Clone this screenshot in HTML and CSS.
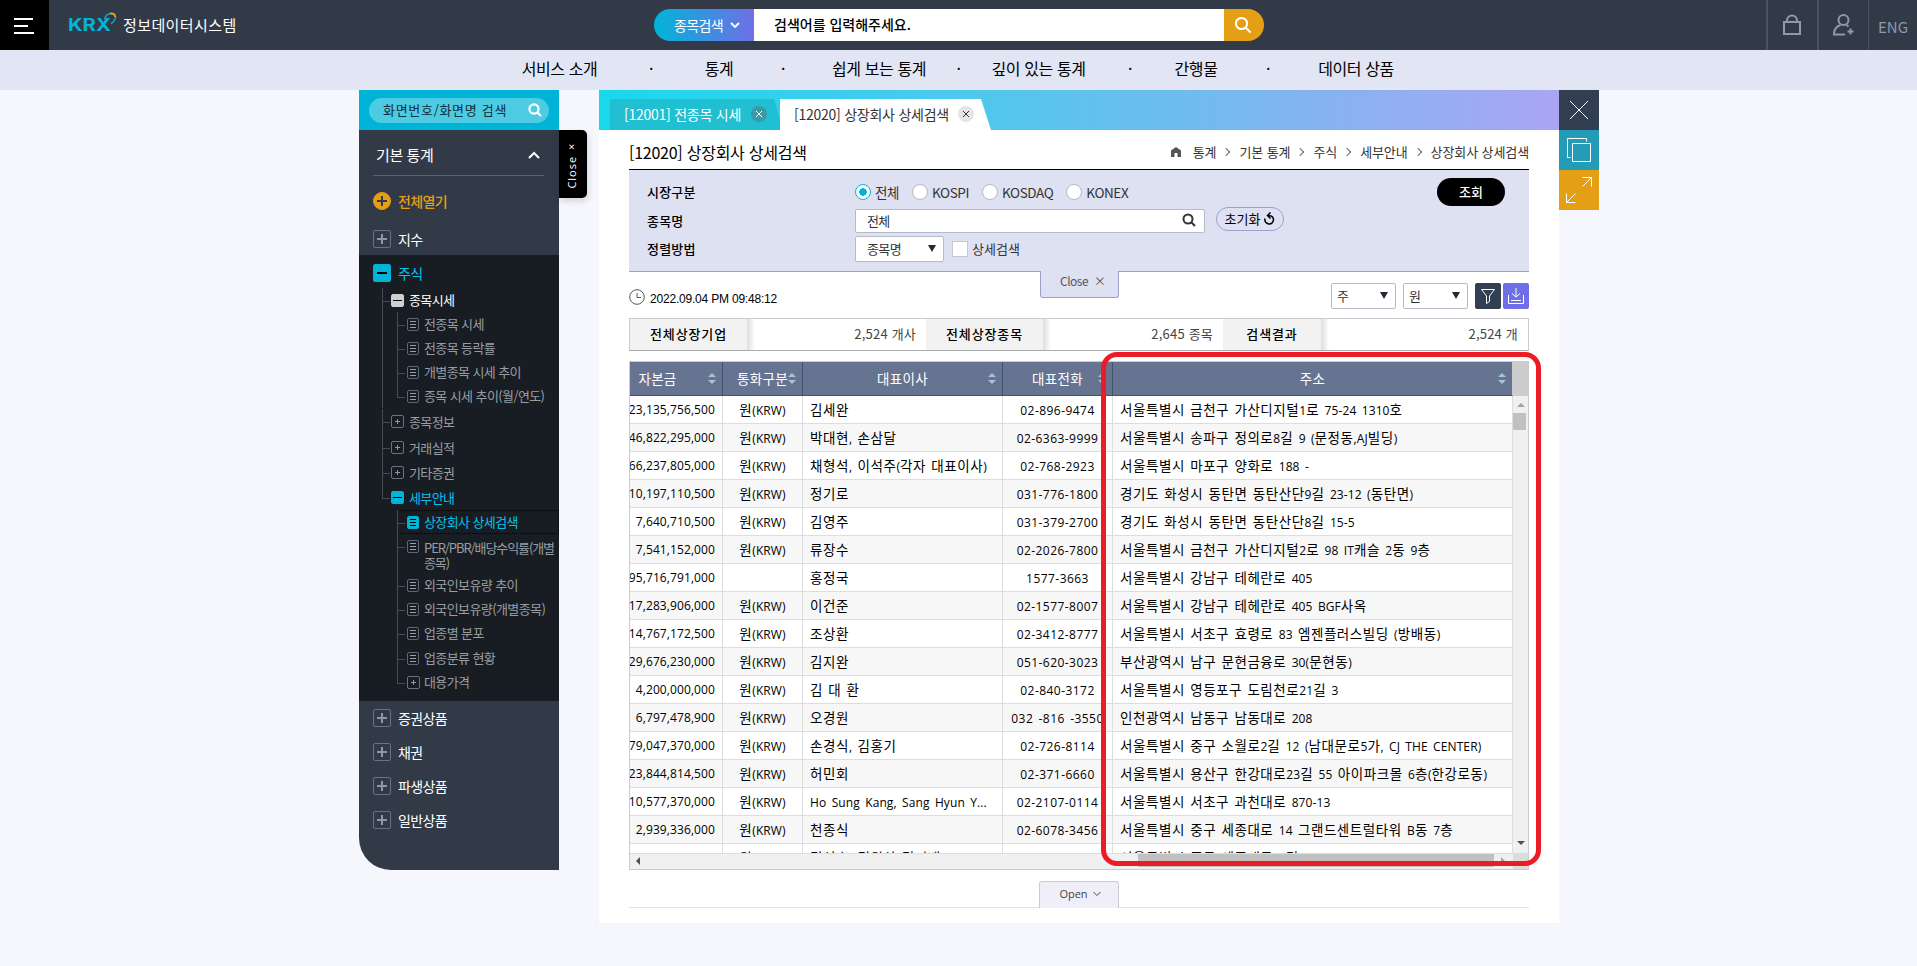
FILE: index.html
```html
<!DOCTYPE html>
<html lang="ko">
    <head>
        <meta charset="utf-8">
        <title>KRX 정보데이터시스템</title>
        <link rel="stylesheet" href="styles.css">
    </head>
    <body>
        <header class="header">
            <button class="burger"><i></i><i></i><i></i></button>
            <a class="logo">
                <svg width="48" height="22" viewBox="0 0 48 22">
                    <text x="-1" y="19" textLength="43" lengthAdjust="spacingAndGlyphs">KRX</text>
                    <path d="M35.500 7.500C36.500 3.500 39.500 1.500 42 1.500" fill="none" stroke="#00b4d8" stroke-width="1.5"/>
                    <path d="M41 1.500C44.500 1 46 2.500 46.300 5" fill="none" stroke="#e59f14" stroke-width="2"/>
                    <path d="M46.500 5C46 8 44.500 10.500 42 11.500" fill="none" stroke="#00b4d8" stroke-width="1.5"/>
                </svg>
                <span>정보데이터시스템</span>
            </a>
            <form class="search">
                <span class="search-type">종목검색
                    <svg width="10" height="7" viewBox="0 0 10 7"><path d="M1 1l4 4 4-4"/></svg>
                </span>
                <span class="search-text">검색어를 입력해주세요.</span>
                <span class="search-btn">
                    <svg width="18" height="18" viewBox="0 0 18 18"><circle cx="7.5" cy="7.5" r="5.6"/><path d="M11.5 11.5l5 5"/></svg>
                </span>
            </form>
            <div class="util">
                <a><svg width="20" height="22" viewBox="0 0 20 22"><path d="M2 8h16v12H2zM5 8V6.500a5 5 0 0 1 10 0V8"/></svg></a>
                <a><svg width="22" height="24" viewBox="0 0 22 24"><circle cx="11.500" cy="7" r="5"/><path d="M8.500 12C4 13.500 2 17 2 21.500h11M14.500 12l2 1.500M18.500 15.500v6M15.500 18.500h6"/></svg></a>
                <a class="eng">ENG</a>
            </div>
        </header>
        <nav class="menu">
            <a>서비스 소개</a><i>·</i><a>통계</a><i>·</i><a>쉽게 보는 통계</a><i>·</i><a>깊이 있는 통계</a><i>·</i><a>간행물</a><i>·</i><a>데이터 상품</a>
        </nav>
        <div class="wrapper">
            <aside class="side">
                <div class="side-search">
                    <span>화면번호/화면명 검색
                        <svg width="14" height="14" viewBox="0 0 14 14"><circle cx="6" cy="6" r="4.600"/><path d="M9.500 9.500l3.500 3.500"/></svg>
                    </span>
                </div>
                <div class="side-title">기본 통계
                    <svg width="12" height="8" viewBox="0 0 12 8"><path d="M1 7l5-5 5 5"/></svg>
                </div>
                <div class="item open-all"><b class="ico"></b>전체열기</div>
                <div class="item"><b class="ico"></b>지수</div>
                <div class="tree">
                    <div class="item on"><b class="ico minus"></b>주식</div>
                    <ul class="depth2">
                        <li class="now"><b class="ico minus"></b>종목시세
                            <ul class="depth3">
                                <li><b class="doc"></b>전종목 시세</li>
                                <li><b class="doc"></b>전종목 등락률</li>
                                <li><b class="doc"></b>개별종목 시세 추이</li>
                                <li><b class="doc"></b>종목 시세 추이(월/연도)</li>
                            </ul>
                        </li>
                        <li><b class="ico"></b>종목정보</li>
                        <li><b class="ico"></b>거래실적</li>
                        <li><b class="ico"></b>기타증권</li>
                        <li class="on"><b class="ico minus"></b>세부안내
                            <ul class="depth3">
                                <li class="on"><b class="doc"></b>상장회사 상세검색</li>
                                <li class="two"><b class="doc"></b>PER/PBR/배당수익률(개별<br>종목)</li>
                                <li><b class="doc"></b>외국인보유량 추이</li>
                                <li><b class="doc"></b>외국인보유량(개별종목)</li>
                                <li><b class="doc"></b>업종별 분포</li>
                                <li><b class="doc"></b>업종분류 현황</li>
                                <li><b class="ico"></b>대용가격</li>
                            </ul>
                        </li>
                    </ul>
                </div>
                <div class="item"><b class="ico"></b>증권상품</div>
                <div class="item"><b class="ico"></b>채권</div>
                <div class="item"><b class="ico"></b>파생상품</div>
                <div class="item"><b class="ico"></b>일반상품</div>
            </aside>
            <div class="side-close"><span>Close ×</span></div>
            <main class="content">
                <div class="tabs">
                    <a class="tab">[12001] 전종목 시세 <svg width="16" height="16" viewBox="0 0 16 16"><circle cx="8" cy="8" r="8"/><path d="M5 5l6 6M11 5l-6 6"/></svg></a>
                    <a class="tab active">[12020] 상장회사 상세검색 <svg width="16" height="16" viewBox="0 0 16 16"><circle cx="8" cy="8" r="8"/><path d="M5 5l6 6M11 5l-6 6"/></svg></a>
                </div>
                <div class="page">
                    <div class="page-head">
                        <h1>[12020] 상장회사 상세검색</h1>
                        <div class="path">
                            <svg width="10" height="10" viewBox="0 0 10 10"><path d="M5 0l5 3.500V10H6.500V6h-3v4H0V3.500z"/></svg>
                            <span>통계</span><i></i><span>기본 통계</span><i></i><span>주식</span><i></i><span>세부안내</span><i></i><span>상장회사 상세검색</span>
                        </div>
                    </div>
                    <div class="filter">
                        <div class="row">
                            <label class="name">시장구분</label>
                            <label class="radio checked">전체</label>
                            <label class="radio">KOSPI</label>
                            <label class="radio">KOSDAQ</label>
                            <label class="radio">KONEX</label>
                            <button class="submit">조회</button>
                        </div>
                        <div class="row">
                            <label class="name">종목명</label>
                            <span class="input">전체
                                <svg width="14" height="14" viewBox="0 0 14 14"><circle cx="6" cy="6" r="4.500"/><path d="M9.500 9.500l3.500 3.500"/></svg>
                            </span>
                            <button class="reset">초기화
                                <svg width="11" height="13" viewBox="0 0 11 13"><path d="M1 6.500a4.300 4.300 0 1 0 7.500-1.500C7.500 3.800 6 3.500 3.500 3.500M6.500 .5l-3 3 3 3"/></svg>
                            </button>
                        </div>
                        <div class="row">
                            <label class="name">정렬방법</label>
                            <span class="select">종목명</span>
                            <label class="check">상세검색</label>
                        </div>
                    </div>
                    <div class="fold">Close <small>×</small></div>
                    <div class="toolbar">
                        <svg width="16" height="16" viewBox="0 0 16 16"><circle cx="8" cy="8" r="7.300"/><path d="M8 4v4.500h4"/></svg>
                        <span class="time">2022.09.04 PM 09:48:12</span>
                        <span class="select">주</span>
                        <span class="select">원</span>
                        <span class="tool"><svg width="16" height="17" viewBox="0 0 16 17"><path d="M1.500 1.500h13L9.500 8v5.500l-3 2V8z"/></svg></span>
                        <span class="tool down"><svg width="18" height="17" viewBox="0 0 18 17"><path d="M1.500 7v8.500h15V7M9 0v9M5 5.500L9 9l4-3.500M4 12.500h10"/></svg></span>
                    </div>
                    <div class="summary">
                        <b>전체상장기업</b><span>2,524 개사</span>
                        <b>전체상장종목</b><span>2,645 종목</span>
                        <b>검색결과</b><span>2,524 개</span>
                    </div>
                    <div class="grid">
                        <div class="grid-view">
                            <table>
                                <colgroup><col class="c1"><col class="c2"><col class="c3"><col class="c4"><col class="c5"></colgroup>
                                <thead>
                                    <tr><th>자본금</th><th>통화구분</th><th>대표이사</th><th>대표전화</th><th>주소</th></tr>
                                </thead>
                                <tbody id="rows"></tbody>
                            </table>
                        </div>
                        <div class="vscroll">
                            <div class="corner"></div>
                            <i class="up"></i><div class="thumb"></div><i class="dn"></i>
                        </div>
                        <div class="hscroll"><i class="lt"></i><div class="thumb"></div><i class="rt"></i></div>
                        <div class="corner2"></div>
                        <div class="mark"></div>
                    </div>
                    <div class="more">
                        <span>Open <svg width="8" height="6" viewBox="0 0 8 6"><path d="M.5 1L4 4.500 7.500 1"/></svg></span>
                    </div>
                </div>
            </main>
            <div class="quick">
                <a><svg width="20" height="20" viewBox="0 0 20 20"><path d="M1 1l18 18M19 1L1 19"/></svg></a>
                <a><svg width="24" height="24" viewBox="0 0 24 24"><path d="M3.500 19.500h-3V.5h19v3M5.500 5.500h18v18h-18z"/></svg></a>
                <a><svg width="28" height="28" viewBox="0 0 28 28"><path d="M17.500 1.500h9v9M26.500 1.500l-9 9M1.500 17.500v9h9M1.500 26.500l9-9"/></svg></a>
            </div>
        </div>
        <script>
            var KRW = '원(KRW)';
            var data = [
                ['23,135,756,500', KRW, '김세완', '02-896-9474', '서울특별시 금천구 가산디지털1로 75-24 1310호'],
                ['46,822,295,000', KRW, '박대현, 손삼달', '02-6363-9999', '서울특별시 송파구 정의로8길 9 (문정동,AJ빌딩)'],
                ['66,237,805,000', KRW, '채형석, 이석주(각자 대표이사)', '02-768-2923', '서울특별시 마포구 양화로 188 -'],
                ['10,197,110,500', KRW, '정기로', '031-776-1800', '경기도 화성시 동탄면 동탄산단9길 23-12 (동탄면)'],
                ['7,640,710,500', KRW, '김영주', '031-379-2700', '경기도 화성시 동탄면 동탄산단8길 15-5'],
                ['7,541,152,000', KRW, '류장수', '02-2026-7800', '서울특별시 금천구 가산디지털2로 98 IT캐슬 2동 9층'],
                ['95,716,791,000', '', '홍정국', '1577-3663', '서울특별시 강남구 테헤란로 405'],
                ['17,283,906,000', KRW, '이건준', '02-1577-8007', '서울특별시 강남구 테헤란로 405 BGF사옥'],
                ['14,767,172,500', KRW, '조상환', '02-3412-8777', '서울특별시 서초구 효령로 83 엠젠플러스빌딩 (방배동)'],
                ['29,676,230,000', KRW, '김지완', '051-620-3023', '부산광역시 남구 문현금융로 30(문현동)'],
                ['4,200,000,000', KRW, '김 대 환', '02-840-3172', '서울특별시 영등포구 도림천로21길 3'],
                ['6,797,478,900', KRW, '오경원', '032 -816 -3550', '인천광역시 남동구 남동대로 208'],
                ['79,047,370,000', KRW, '손경식, 김홍기', '02-726-8114', '서울특별시 중구 소월로2길 12 (남대문로5가, CJ THE CENTER)'],
                ['23,844,814,500', KRW, '허민회', '02-371-6660', '서울특별시 용산구 한강대로23길 55 아이파크몰 6층(한강로동)'],
                ['10,577,370,000', KRW, 'Ho Sung Kang, Sang Hyun Y...', '02-2107-0114', '서울특별시 서초구 과천대로 870-13'],
                ['2,939,336,000', KRW, '천종식', '02-6078-3456', '서울특별시 중구 세종대로 14 그랜드센트럴타워 B동 7층'],
                ['', KRW, '김성수, 김원상 김기배', '', '서울특별시 중구 세종대로 9길']
            ];
            // latin runs are set smaller than the hangul
            function cell(text) {
                return '<td><div>' + text.replace(/[\w,.()\-]+/g, '<span class="en">$&</span>') + '</div></td>';
            }
            document.getElementById('rows').innerHTML = data.map(function (row) {
                return '<tr>' + row.map(cell).join('') + '</tr>';
            }).join('');
        </script>
    </body>
</html>
```
FILE: styles.css
```css
* {
    box-sizing: border-box;
}
body {
    margin: 0;
    height: 966px;
    overflow: hidden;
    font-family: "Noto Sans CJK KR", "Noto Sans", sans-serif;
    font-size: 14px;
    color: #000;
    background-color: #f5f7fd;
}
ul {
    margin: 0;
    padding: 0;
    list-style: none;
}
i {
    font-style: normal;
}
svg {
    display: block;
    flex: none;
    fill: none;
    stroke: currentColor;
}
button {
    font-family: inherit;
    border: 0;
    padding: 0;
}

/* header */
.header {
    display: flex;
    height: 50px;
    color: #fff;
    background-color: #323a47;
}
.burger {
    display: flex;
    flex-direction: column;
    gap: 5px;
    width: 49px;
    padding: 18px 0 0 14px;
    background-color: #000;
}
.burger i {
    width: 19px;
    height: 2px;
    background-color: #fff;
}
.burger i:nth-child(2) {
    width: 14px;
}
.burger i:nth-child(3) {
    width: 20px;
}
.logo {
    display: flex;
    width: 605px;
    padding: 12px 0 0 20px;
}
.logo svg {
    overflow: visible;
}
.logo text {
    font: bold 17px "Inter", sans-serif;
    fill: #00b4d8;
    stroke: none;
}
.logo span {
    margin-left: 6px;
    font-size: 15px;
    line-height: 26px;
    letter-spacing: .4px;
}
.search {
    display: flex;
    width: 610px;
    height: 32px;
    margin-top: 9px;
    border-radius: 16px;
    overflow: hidden;
    line-height: 31px;
}
.search-type {
    display: flex;
    align-items: center;
    gap: 7px;
    width: 100px;
    padding-left: 20px;
    letter-spacing: -.6px;
    background: linear-gradient(to right, #00b4d8, #6f70e6);
}
.search-type svg {
    stroke-width: 1.8;
}
.search-text {
    flex: 1;
    padding-left: 20px;
    font-weight: 500;
    color: #000;
    background-color: #fff;
}
.search-btn {
    width: 40px;
    padding: 7px 0 0 10px;
    background-color: #e59f14;
}
.search-btn svg {
    stroke-width: 2;
}
.util {
    display: flex;
    margin-left: auto;
    color: #8d99af;
}
.util a {
    display: flex;
    align-items: center;
    justify-content: center;
    width: 51px;
    height: 50px;
    padding-right: 2px;
    border-left: 2px solid #4b5361;
}
.util svg {
    stroke-width: 2;
}
.util .eng {
    width: 49px;
    padding-top: 2px;
    padding-right: 0;
    border-left-width: 1px;
    font-size: 15px;
}
.menu {
    display: grid;
    grid-template-columns: 75px 108px 28px 100px 92px 67px 93px 90px 42px 102px 74px;
    height: 40px;
    padding: 0 0 2px 522px;
    line-height: 37px;
    font-size: 16px;
    letter-spacing: -.4px;
    text-align: center;
    white-space: nowrap;
    background-color: #e1e5f4;
}
.menu a {
    display: flex;
    justify-content: center;
}

/* side menu */
.wrapper {
    display: flex;
    padding-left: 359px;
    align-items: flex-start;
}
.side {
    width: 200px;
    height: 780px;
    color: #fff;
    background-color: #323a47;
    border-bottom-left-radius: 32px;
    letter-spacing: -.6px;
    white-space: nowrap;
}
.side-search {
    height: 40px;
    padding: 8px 10px;
    background-color: #00b4d8;
}
.side-search span {
    display: flex;
    align-items: center;
    justify-content: space-between;
    height: 25px;
    padding: 0 7px 2px 14px;
    border-radius: 13px;
    font-size: 13px;
    letter-spacing: .7px;
    color: #10303c;
    background-color: #4dcbe3;
}
.side-search svg {
    color: #fff;
    stroke-width: 2.200;
}
.side-title {
    display: flex;
    justify-content: space-between;
    height: 46px;
    margin: 0 15px 9px 14px;
    padding: 2px 4px 0 3px;
    border-bottom: 1px solid #5b626e;
    line-height: 45px;
    font-size: 15px;
    letter-spacing: -.4px;
}
.side-title svg {
    margin-top: 19px;
    stroke-width: 2;
}
.item {
    display: flex;
    align-items: center;
    height: 34px;
    padding-left: 14px;
    line-height: 18px;
}
.item .ico {
    margin-right: 7px;
}
.ico {
    display: block;
    flex: none;
    width: 18px;
    height: 18px;
    border: 1px solid #69727f;
    border-radius: 2px;
    color: #8f98a8;
    background: linear-gradient(currentColor, currentColor) center/10px 2px no-repeat, linear-gradient(currentColor, currentColor) center/2px 10px no-repeat;
}
.ico.minus {
    color: #000;
    background: linear-gradient(currentColor, currentColor) center/10px 2px no-repeat, #00b4d8;
    border-color: #00b4d8;
}
.open-all {
    height: 32px;
    margin-bottom: 5px;
    padding-bottom: 1px;
    font-weight: 500;
    color: #e59f14;
}
.open-all .ico {
    color: #323a47;
    border-color: #e59f14;
    border-radius: 50%;
    background-color: #e59f14;
}
.item.on,
.side .on {
    color: #00c3ee;
}
.tree {
    height: 446px;
    margin-top: -1px;
    background-color: #181d23;
}
.tree .item {
    height: 36px;
}
.depth2 {
    padding-left: 23px;
    font-size: 13px;
    color: #989da3;
}
.depth2 li {
    position: relative;
    padding: 0 0 0 27px;
    line-height: 25.200px;
}
.depth2 li.now {
    color: #fff;
    line-height: 24px;
    margin-bottom: 1px;
    margin-top: -3px;
}
/* branches and icons lie on the tree line */
.depth2 li::before {
    content: "";
    position: absolute;
    left: 0;
    top: 0;
    width: 8px;
    height: 13px;
    border-bottom: 1px solid #474c52;
}
.depth2 li::after {
    content: "";
    position: absolute;
    left: 0;
    top: 0;
    bottom: 0;
    border-left: 1px solid #474c52;
}
.depth2 li:last-child::after {
    bottom: auto;
    height: 13px;
}
.depth2 li > b {
    position: absolute;
    left: 9px;
    top: 6px;
    width: 13px;
    height: 13px;
    background-size: 5px 1px, 1px 5px;
}
.depth2 li > .minus {
    background-size: 9px 1px, auto;
}
.depth2 .now > .minus {
    background-color: #cfcfcf;
    border-color: #cfcfcf;
}
.depth2 .depth3 {
    margin-left: -12px;
    color: #989da3;
}
.depth2 .depth3 li {
    line-height: 24.100px;
}
.depth2 .depth3 li.two {
    padding-top: 6px;
    padding-bottom: 3px;
    line-height: 15px;
    letter-spacing: -1.1px;
}
.doc {
    border: 1px solid #5d6979;
    border-radius: 2px;
    background: linear-gradient(#98a0ad 1px, transparent 1px 3px, #98a0ad 3px 4px, transparent 4px 6px, #98a0ad 6px) center/6px 7px no-repeat;
}
.depth2 .depth3 .ico {
    left: 10px;
}
.depth2 .depth3 .doc {
    left: 10px;
    width: 12px;
    background-size: 6px 7px;
}
.depth2 .depth3 .on {
    outline: 1px dotted #000;
    outline-offset: -1px;
}
.depth2 .depth3 .on .doc {
    border-color: #00b4d8;
    background-color: #00b4d8;
    background-image: linear-gradient(#000 1px, transparent 1px 3px, #000 3px 4px, transparent 4px 6px, #000 6px);
}
.side-close {
    display: flex;
    align-items: center;
    justify-content: center;
    width: 28px;
    height: 68px;
    margin: 40px 12px 0 0;
    padding-right: 3px;
    border-radius: 0 5px 5px 0;
    font-size: 11px;
    letter-spacing: 1px;
    word-spacing: -3px;
    color: #fff;
    background-color: #000;
    box-shadow: 1px 3px 6px rgba(0, 0, 0, .15);
}
.side-close span {
    writing-mode: vertical-rl;
    transform: rotate(180deg);
    font-family: "Open Sans", sans-serif;
}

/* content */
.content {
    width: 960px;
    height: 833px;
    background-color: #fff;
}
.tabs {
    display: flex;
    height: 40px;
    padding: 9px 0 0 11px;
    background: linear-gradient(to right, #18d9ec, #5cc3ee 48%, #aaa5f3);
}
.tab {
    display: flex;
    align-items: center;
    justify-content: space-between;
    width: 170px;
    height: 31px;
    padding: 0 13px 2px 14px;
    letter-spacing: -.25px;
    white-space: nowrap;
    color: #fff;
    background-color: #20bfd2;
    clip-path: polygon(0 0, 164px 0, 170px 20px, 170px 100%, 0 100%);
}
.tab circle {
    fill: #3a9aa6;
    stroke: none;
}
.tab.active {
    width: 211px;
    padding-right: 17px;
    color: #333;
    background-color: #fff;
    clip-path: polygon(0 0, 201px 0, 211px 100%, 0 100%);
}
.tab.active circle {
    fill: #e5e5e5;
}
.page {
    padding: 0 30px;
}
.page-head {
    display: flex;
    justify-content: space-between;
    height: 40px;
    border-bottom: 1px solid #000;
    line-height: 44px;
}
h1 {
    margin: 0;
    font-size: 16px;
    font-weight: 400;
    letter-spacing: -.25px;
}
.path {
    display: flex;
    align-items: center;
    padding-top: 4px;
    font-size: 13px;
    letter-spacing: -.1px;
    color: #333;
}
.path svg {
    margin-right: 12px;
    fill: #555;
    stroke: none;
}
.path i {
    width: 6px;
    height: 6px;
    margin: 0 10px 0 7px;
    border: solid #666;
    border-width: 1px 1px 0 0;
    transform: rotate(45deg);
}
.filter {
    height: 102px;
    padding: 8px 24px 0 18px;
    border-bottom: 1px solid #9da0c9;
    background-color: #dee1f2;
}
.row {
    display: flex;
    align-items: center;
    height: 28.600px;
    white-space: nowrap;
}
.name {
    width: 208px;
    padding-bottom: 1px;
    font-size: 13px;
    font-weight: 500;
    letter-spacing: .2px;
}
.radio {
    display: flex;
    align-items: center;
    margin-right: 13px;
    font-size: 13.500px;
    letter-spacing: -.4px;
    color: #333;
}
.radio::before {
    content: "";
    width: 14px;
    height: 14px;
    margin-right: 4px;
    border: 1px solid #b3b6c4;
    border-radius: 50%;
    background-color: #fff;
}
.radio.checked::before {
    border-color: #00b4d8;
    background-image: radial-gradient(circle, #00b4d8 3.500px, #fff 4px);
}
.submit {
    width: 68px;
    height: 28px;
    margin-left: auto;
    border-radius: 14px;
    padding-bottom: 1px;
    font-size: 13px;
    font-weight: 500;
    color: #fff;
    background-color: #000;
}
.input {
    display: flex;
    align-items: center;
    justify-content: space-between;
    width: 350px;
    height: 24px;
    padding: 0 8px 1px 11px;
    border: 1px solid #b7bac8;
    border-radius: 2px;
    font-size: 13px;
    letter-spacing: -.7px;
    color: #333;
    background-color: #fff;
}
.input svg {
    stroke-width: 2;
}
.reset {
    display: flex;
    align-items: center;
    justify-content: center;
    gap: 4px;
    width: 68px;
    height: 24px;
    margin: -3px 0 0 11px;
    padding-bottom: 1px;
    border: 1px solid #9da0c9;
    border-radius: 12px;
    font-size: 13px;
    background-color: #dee1f2;
}
.reset svg {
    stroke-width: 1.500;
}
.select {
    display: flex;
    align-items: center;
    justify-content: space-between;
    width: 89px;
    height: 26px;
    padding: 0 7px 1px 11px;
    border: 1px solid #b7bac8;
    border-radius: 2px;
    font-size: 13px;
    letter-spacing: -.6px;
    color: #333;
    background-color: #fff;
}
.select::after {
    content: "";
    border: solid transparent;
    border-width: 7px 4.500px 0;
    border-top-color: #222b38;
}
.check {
    display: flex;
    align-items: center;
    margin-left: 8px;
    padding-bottom: 1px;
    font-size: 13px;
    color: #333;
}
.check::before {
    content: "";
    width: 14px;
    height: 14px;
    margin-right: 4px;
    border: 1px solid #c8c8c8;
    background-color: #fff;
}
.fold {
    width: 79px;
    height: 27px;
    margin: -1px 0 0 411px;
    padding-left: 19px;
    border: 1px solid #9da0c9;
    border-top: 0;
    border-radius: 0 0 3px 3px;
    line-height: 20px;
    font-size: 12px;
    letter-spacing: -.5px;
    color: #555;
    background-color: #dee1f2;
}
.fold small {
    margin-left: 3px;
    font-size: 12px;
}
.toolbar {
    display: flex;
    height: 26px;
    margin-top: -15px;
    margin-bottom: 9px;
}
.toolbar > svg {
    margin-top: 6px;
    color: #555a66;
}
.time {
    margin: 8px auto 0 5px;
    font: 12px/16px "Liberation Sans", sans-serif;
    letter-spacing: -.2px;
}
.toolbar .select {
    width: 65px;
    margin-right: 7px;
    padding-left: 5px;
}
.tool {
    display: flex;
    align-items: center;
    justify-content: center;
    width: 26px;
    border-radius: 2px;
    color: #fff;
    background-color: #323e52;
}
.tool.down {
    margin-left: 2px;
    background-color: #6f70e6;
}
.summary {
    display: grid;
    grid-template-columns: 117px 179px 117px 180px 98px 1fr;
    height: 33px;
    border: 1px solid #ccc;
    border-bottom-color: #aaa;
    line-height: 30px;
    font-size: 13px;
}
.summary b {
    text-align: center;
    font-weight: 500;
    letter-spacing: .9px;
    background-color: #f2f2f2;
}
.summary span {
    padding-right: 10px;
    text-align: right;
    letter-spacing: .2px;
    color: #444;
    background: linear-gradient(to right, #ddd, #fff 8px);
}

/* grid */
.grid {
    position: relative;
    display: grid;
    grid-template-columns: 883px 15px;
    grid-template-rows: 491px 16px;
    width: 900px;
    height: 509px;
    margin-top: 10px;
    border: 1px solid #ccc;
}
.grid-view {
    overflow: hidden;
}
table {
    width: 883px;
    table-layout: fixed;
    border-collapse: separate;
    border-spacing: 0;
}
.c1 {
    width: 93px;
}
.c2 {
    width: 80px;
}
.c3 {
    width: 200px;
}
.c4 {
    width: 110px;
}
th {
    height: 34px;
    padding: 0 0 2px;
    border-right: 1px solid #3f536e;
    border-bottom: 1px solid #3f536e;
    font-weight: normal;
    font-size: 13.500px;
    letter-spacing: .3px;
    color: #fff;
    background: #667391;
    white-space: nowrap;
    position: relative;
}
th:last-child {
    border-right-color: #ccc;
}
th:first-child {
    padding-right: 37px;
}
/* sort arrows */
th::before,
th::after {
    content: "";
    position: absolute;
    right: 6px;
    top: 11px;
    border: solid transparent;
    border-width: 0 4px 4px;
    border-bottom-color: #a9c3d6;
}
th::after {
    top: 18px;
    border-width: 4px 4px 0;
    border-top-color: #a9c3d6;
}
td {
    height: 28px;
    padding: 0;
    border-right: 1px solid #ddd;
    border-bottom: 1px solid #ddd;
    font-size: 13.500px;
    letter-spacing: .55px;
    word-spacing: 1px;
    white-space: nowrap;
}
td div {
    height: 27px;
    line-height: 26px;
    padding-left: 7px;
    overflow: hidden;
}
tr:nth-child(even) td {
    background-color: #f7f7f7;
}
.en {
    font-family: "Open Sans", sans-serif;
    font-size: 12px;
    letter-spacing: .1px;
}
td:nth-child(1) div {
    display: flex;
    justify-content: flex-end;
    padding: 1px 7px 0 0;
}
td:nth-child(2) div {
    padding: 0;
    text-align: center;
}
td:nth-child(4) div {
    padding: 0;
    text-align: center;
}
td:nth-child(4) .en {
    letter-spacing: .45px;
}
.vscroll {
    display: flex;
    flex-direction: column;
    align-items: center;
    background-color: #f0f0f0;
}
.corner {
    width: 15px;
    height: 34px;
    background-color: #ccc;
}
.vscroll .thumb {
    width: 13px;
    height: 17px;
    margin: 6px 2px 0 0;
    background-color: #c1c1c1;
}
.up {
    margin-top: 7px;
    border: solid transparent;
    border-width: 0 4px 4px;
    border-bottom-color: #a3a3a3;
}
.dn {
    margin: auto 0 8px;
    border: solid transparent;
    border-width: 4px 4px 0;
    border-top-color: #505050;
}
.hscroll {
    display: flex;
    align-items: center;
    padding: 0 8px 2px 6px;
    border-top: 1px solid #ddd;
    background-color: #f0f0f0;
}
.hscroll .thumb {
    width: 356px;
    height: 13px;
    margin: 0 7px 0 auto;
    background-color: #c1c1c1;
}
.lt,
.rt {
    border: solid transparent;
    border-width: 4px 4px 4px 0;
    border-right-color: #505050;
}
.rt {
    border-width: 4px 0 4px 4px;
    border-left-color: #a3a3a3;
}
.corner2 {
    background-color: #dcdcdc;
}
.mark {
    position: absolute;
    left: 471px;
    top: -10px;
    width: 440px;
    height: 514px;
    border: 5px solid #ed1c24;
    border-radius: 16px;
}
.more {
    display: flex;
    justify-content: center;
    height: 27px;
    margin-top: 11px;
    border-bottom: 1px solid #e3e3e3;
}
.more span {
    display: flex;
    align-items: center;
    justify-content: center;
    gap: 5px;
    width: 80px;
    height: 27px;
    padding: 0 4px 3px 0;
    padding-left: 6px;
    border: 1px solid #ccc;
    border-bottom: 0;
    border-radius: 3px 3px 0 0;
    font: 11px "Open Sans", sans-serif;
    color: #444;
    background-color: #efeff9;
}

.quick a {
    display: flex;
    align-items: center;
    justify-content: center;
    width: 40px;
    height: 40px;
    color: #fff;
    background-color: #323e52;
}
.quick a:nth-child(2) {
    background-color: #259cb7;
}
.quick a:nth-child(3) {
    background-color: #e59f14;
}
```
